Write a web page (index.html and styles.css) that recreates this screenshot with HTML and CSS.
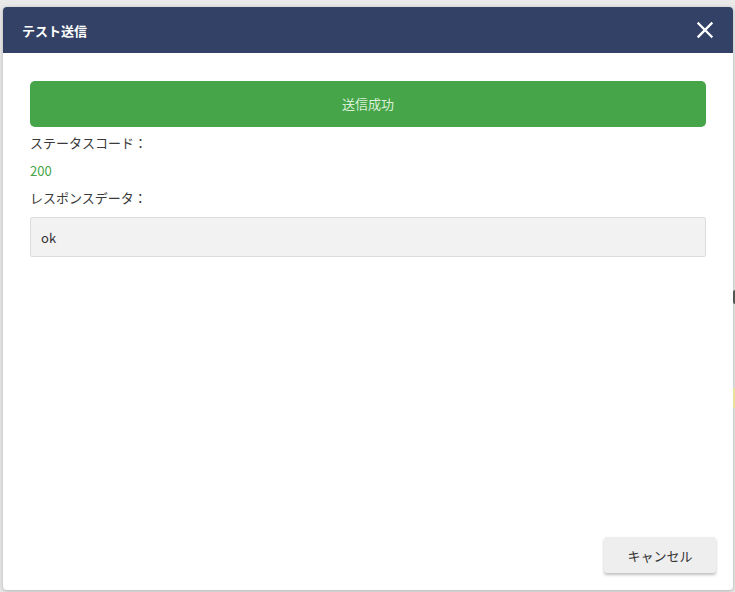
FILE: index.html
```html
<!DOCTYPE html>
<html lang="ja">
<head>
<meta charset="utf-8">
<title>テスト送信</title>
<link rel="stylesheet" href="styles.css">
</head>
<body>
<div class="backdrop">
  <div class="edge-mark edge-dark"></div>
  <div class="edge-mark edge-yellow"></div>
  <div class="modal">
    <div class="modal-header">
      <span class="modal-title">テスト送信</span>
      <button class="close-btn" aria-label="close">
        <svg width="18" height="18" viewBox="0 0 18 18"><path d="M2.5 2.5 L15.5 15.5 M15.5 2.5 L2.5 15.5" stroke="#ffffff" stroke-width="2.3" stroke-linecap="square" fill="none"/></svg>
      </button>
    </div>
    <div class="modal-body">
      <div class="result-banner">送信成功</div>
      <div class="label">ステータスコード：</div>
      <div class="status-code">200</div>
      <div class="label">レスポンスデータ：</div>
      <div class="response-box">ok</div>
    </div>
    <div class="modal-footer">
      <button class="cancel-btn">キャンセル</button>
    </div>
  </div>
</div>
</body>
</html>
```

FILE: styles.css
```css
* { box-sizing: border-box; }
html, body {
  margin: 0;
  padding: 0;
  width: 735px;
  height: 592px;
  overflow: hidden;
  font-family: "Noto Sans CJK JP", "Noto Sans", sans-serif;
}
.backdrop {
  position: relative;
  width: 735px;
  height: 592px;
  background: #e9e9e9;
  padding: 7px 2px 2px 3px;
}
.edge-mark {
  position: absolute;
  right: 0;
  width: 2px;
}
.edge-dark { top: 290px; height: 14px; background: #555; border-radius: 2px 0 0 2px; }
.edge-yellow { top: 388px; height: 20px; background: #e6e29a; }
.modal {
  width: 730px;
  height: 583px;
  background: #ffffff;
  border-radius: 4px;
  box-shadow: 0 1px 4px rgba(0,0,0,0.25);
  display: flex;
  flex-direction: column;
  overflow: hidden;
}
.modal-header {
  height: 46px;
  flex: none;
  background: #324165;
  display: flex;
  align-items: center;
  justify-content: space-between;
  padding: 0 19px 0 19px;
}
.modal-title {
  color: #ffffff;
  font-size: 13px;
  font-weight: 700;
}
.close-btn {
  background: none;
  border: none;
  padding: 0;
  width: 18px;
  height: 18px;
  display: flex;
  cursor: pointer;
}
.modal-body {
  flex: 1;
  padding: 28px 27px 0 27px;
  display: flex;
  flex-direction: column;
}
.result-banner {
  height: 46px;
  background: #45a548;
  border-radius: 5px;
  color: #dcefdb;
  font-size: 13px;
  display: flex;
  align-items: center;
  justify-content: center;
  padding-bottom: 2px;
}
.label {
  font-size: 13px;
  color: #3a3a3a;
  line-height: 18px;
  margin-top: 7px;
}
.status-code {
  font-size: 13px;
  color: #45a548;
  line-height: 18px;
  margin-top: 10px;
}
.label + .status-code + .label { margin-top: 9px; }
.response-box {
  margin-top: 10px;
  height: 40px;
  background: #f2f2f2;
  border: 1px solid #dcdcdc;
  border-radius: 2px;
  font-size: 13px;
  color: #333333;
  display: flex;
  align-items: center;
  padding-left: 10px;
}
.modal-footer {
  flex: none;
  display: flex;
  justify-content: flex-end;
  padding: 0 17px 17px 0;
}
.cancel-btn {
  width: 112px;
  height: 36px;
  background: #eeeeee;
  border: none;
  border-radius: 3px;
  box-shadow: 0 2px 3px rgba(0,0,0,0.25);
  font-family: "Noto Sans CJK JP", "Noto Sans", sans-serif;
  font-size: 13px;
  color: #333333;
}
```
